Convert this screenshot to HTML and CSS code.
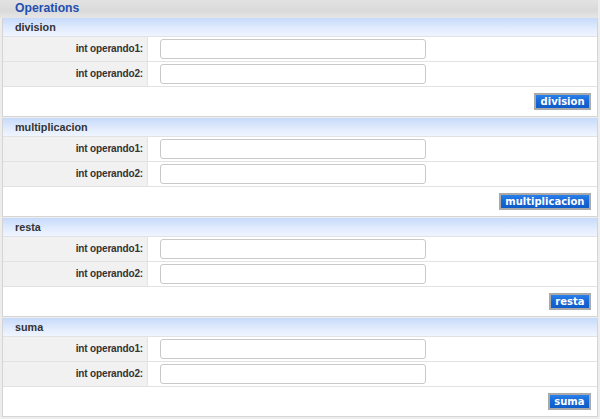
FILE: index.html
```html
<!DOCTYPE html>
<html>
<head>
<meta charset="utf-8">
<link rel="stylesheet" href="styles.css">
</head>
<body>
<div class="panel">
  <div class="title">Operations</div>

  <div class="section">
    <div class="sec-head">division</div>
    <div class="row"><div class="label">int operando1:</div><div class="field"><input class="inp" type="text"></div></div>
    <div class="row"><div class="label">int operando2:</div><div class="field"><input class="inp" type="text"></div></div>
    <div class="actions"><button class="btn">division</button></div>
  </div>

  <div class="section">
    <div class="sec-head">multiplicacion</div>
    <div class="row"><div class="label">int operando1:</div><div class="field"><input class="inp" type="text"></div></div>
    <div class="row"><div class="label">int operando2:</div><div class="field"><input class="inp" type="text"></div></div>
    <div class="actions"><button class="btn">multiplicacion</button></div>
  </div>

  <div class="section">
    <div class="sec-head">resta</div>
    <div class="row"><div class="label">int operando1:</div><div class="field"><input class="inp" type="text"></div></div>
    <div class="row"><div class="label">int operando2:</div><div class="field"><input class="inp" type="text"></div></div>
    <div class="actions"><button class="btn">resta</button></div>
  </div>

  <div class="section">
    <div class="sec-head">suma</div>
    <div class="row"><div class="label">int operando1:</div><div class="field"><input class="inp" type="text"></div></div>
    <div class="row"><div class="label">int operando2:</div><div class="field"><input class="inp" type="text"></div></div>
    <div class="actions"><button class="btn">suma</button></div>
  </div>
</div>
</body>
</html>
```
FILE: styles.css
```css
html, body {
  margin: 0;
  padding: 0;
  background: #ededed;
  font-family: "Liberation Sans", Arial, sans-serif;
}
.panel {
  margin-left: 2px;
  width: 596px;
  box-sizing: border-box;
}
.title {
  height: 18px;
  line-height: 17px;
  padding-left: 15px;
  margin-left: -2px;
  width: 598px;
  box-sizing: border-box;
  background: linear-gradient(#e2e2e2, #dadada 60%, #e6e6e6);
  color: #1f4fb0;
  font-weight: bold;
  font-size: 12.2px;
}
.section {
  background: #fff;
  border-left: 1px solid #d4d4d4;
  border-right: 1px solid #d4d4d4;
  border-bottom: 1px solid #d6d6d6;
  margin-bottom: 1px;
}
.sec-head {
  height: 18px;
  line-height: 18px;
  padding-left: 12px;
  background: linear-gradient(#c6dafb, #e2ecfd 60%, #f0f5ff);
  color: #333;
  font-weight: bold;
  font-size: 10.8px;
}
.row {
  display: grid;
  grid-template-columns: 145px 1fr;
  border-top: 1px solid #e2e2e2;
  height: 24px;
}
.label {
  background: #f1f1f1;
  border-right: 1px solid #e4e4e4;
  text-align: right;
  padding-right: 4px;
  font-weight: bold;
  font-size: 10px;
  letter-spacing: -0.15px;
  color: #333;
  line-height: 24px;
}
.field {
  padding-left: 12px;
  display: flex;
  align-items: center;
}
.inp {
  width: 266px;
  height: 20px;
  box-sizing: border-box;
  border: 1px solid #c9c9c9;
  border-radius: 3px;
  background: #fff;
  margin: 0;
  padding: 0 3px;
}
.actions {
  border-top: 1px solid #e2e2e2;
  height: 30px;
  display: flex;
  justify-content: flex-end;
  align-items: flex-start;
  padding-right: 6px;
  box-sizing: border-box;
  padding-top: 6px;
}
.btn {
  height: 17px;
  margin: 0;
  padding: 0 4.5px;
  border: 2px solid #a9a9a9;
  background: linear-gradient(#2a80ea, #1466d8 50%, #0f5cc8);
  color: #fff;
  font-family: "DejaVu Sans", Verdana, sans-serif;
  font-weight: bold;
  font-size: 10px;
  line-height: 13px;
  cursor: pointer;
}
```
